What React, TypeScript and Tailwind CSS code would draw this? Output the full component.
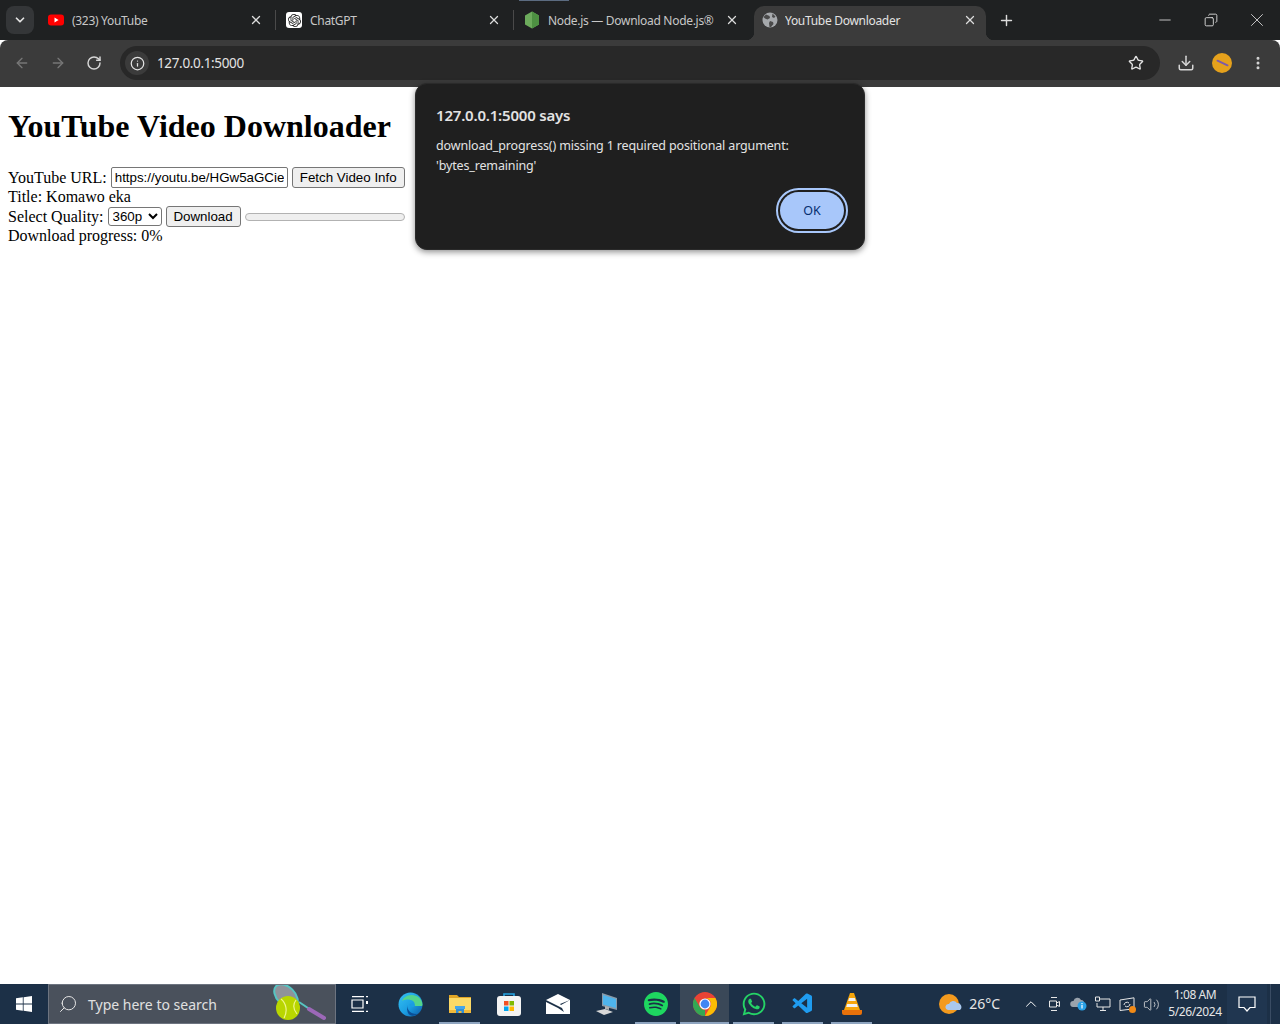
import { ArrowLeft, ArrowRight, ChevronDown, ChevronUp, Copy, Download, Info, Minus, MoreVertical, Plus, RotateCw, Search, Star, Volume2, X } from "lucide-react";
import { FaWhatsapp } from "react-icons/fa";
import { SiOpenai, SiSpotify } from "react-icons/si";
import { VscVscode } from "react-icons/vsc";

const uiFont = "font-['Noto_Sans',sans-serif]";

function YoutubeIcon() {
    return (
        <svg width="16" height="12" viewBox="0 0 16 12">
            <rect width="16" height="11" y="0.5" rx="3" fill="#f00" />
            <path d="M6.5 3.6 10.6 6l-4.1 2.4z" fill="#fff" />
        </svg>
    );
}

function NodeIcon() {
    return (
        <svg width="16" height="18" viewBox="0 0 16 18">
            <path d="M8 0.5 15 4.5v9L8 17.5 1 13.5v-9z" fill="#6cab5c" />
            <path d="M8 0.5 15 4.5v9L8 17.5z" fill="#4d9142" />
        </svg>
    );
}

function GlobeIcon() {
    return (
        <svg width="16" height="16" viewBox="0 0 16 16">
            <circle cx="8" cy="8" r="7.5" fill="#a6a9ac" />
            <path d="M4 2.5 7.5 4 8 6 5.5 7.5 3 6.5 1.5 5zM8 9l3 1 .5 2-2.5 3H7.5L7 11zM10.5 1.5l3 3-1.5 1.5-2-1z" fill="#4a4a4a" />
        </svg>
    );
}

function Tab({ icon, title, sizing, closeMargin, separator }: { icon: any; title: string; sizing: string; closeMargin: string; separator?: boolean }) {
    return (
        <div className={`${sizing} flex h-[34px] shrink-0 items-center pb-[6px] text-[#c7c7c7]`}>
            <div className="flex w-[16px] justify-center">{icon}</div>
            <span className="ml-[8px] flex-1 truncate pt-[2px] text-[12px] tracking-[-0.3px]">{title}</span>
            <X size={14} strokeWidth={2.200} className={`${closeMargin} text-[#dcdcdc]`} />
            {separator && <div className="h-[20px] w-px bg-[#4a4a4a]" />}
        </div>
    );
}

function ActiveTab({ icon, title }: { icon: any; title: string }) {
    return (
        <div className="relative flex h-[34px] w-[232px] shrink-0 items-center rounded-t-[10px] bg-[#3b3b3b] pb-[6px] pl-[8px] text-[#e3e3e3]">
            <div className="absolute bottom-0 left-[-8px] h-[8px] w-[8px] bg-[radial-gradient(circle_at_0_0,transparent_8px,#3b3b3b_8.5px)]" />
            <div className="absolute bottom-0 right-[-8px] h-[8px] w-[8px] bg-[radial-gradient(circle_at_100%_0,transparent_8px,#3b3b3b_8.5px)]" />
            <div className="flex w-[16px] justify-center">{icon}</div>
            <span className="ml-[7px] flex-1 truncate pt-[2px] text-[12px] tracking-[-0.3px]">{title}</span>
            <X size={14} strokeWidth={2.200} className="mr-[9px] text-[#dcdcdc]" />
        </div>
    );
}

function ChromeIcon() {
    return (
        <svg width="24" height="24" viewBox="0 0 24 24">
            <circle cx="12" cy="12" r="12" fill="#ea4335" />
            <path d="M12 24A12 12 0 0 1 1.6 6l5.2 9a6 6 0 0 0 5.2 3z" fill="#34a853" />
            <path d="M12 24a12 12 0 0 0 10.4-18H12a6 6 0 0 1 5.2 9z" fill="#fbbc04" />
            <circle cx="12" cy="12" r="5.6" fill="#fff" />
            <circle cx="12" cy="12" r="4.4" fill="#4285f4" />
        </svg>
    );
}

function EdgeIcon() {
    return (
        <svg width="25" height="25" viewBox="0 0 25 25">
            <defs>
                <linearGradient id="edge" x1="0" y1="0" x2="1" y2="1">
                    <stop offset="0" stopColor="#35c1f1" />
                    <stop offset="0.55" stopColor="#1b9de2" />
                    <stop offset="1" stopColor="#0c59a4" />
                </linearGradient>
            </defs>
            <circle cx="12.5" cy="12.5" r="12" fill="url(#edge)" />
            <path d="M24.5 13c0-6-5-10-11-10C9 3 5 6 4 9c3-2 8-2 11 0 2 1.500 2 4 1 5h8z" fill="#54d48c" />
            <path d="M9 13c0 5 4 9 9 9 1 0 2 0 3-1-3 3-9 4-11 0-1-2-1-5-1-8z" fill="#0b4f96" />
            <path d="M11 13c1-2 5-2 6 0 0 1-1 2-2 2s-3-1-4-2z" fill="#1b9de2" />
        </svg>
    );
}

function FolderIcon() {
    return (
        <svg width="24" height="20" viewBox="0 0 24 20">
            <path d="M1 1h8l2 2h12v16H1z" fill="#e0a526" />
            <rect x="1" y="4" width="22" height="15" fill="#fbd966" />
            <rect x="1" y="16" width="22" height="3" fill="#f0b93a" />
            <path d="M8 19v-4h8v4h-2.500v-2h-3v2z" fill="#2f8fd8" />
            <rect x="7" y="12" width="10" height="3" fill="#45a5e8" />
        </svg>
    );
}

function StoreIcon() {
    return (
        <svg width="24" height="24" viewBox="0 0 24 24">
            <path d="M7 6V2h10v4" fill="none" stroke="#25a5e4" strokeWidth="1.6" />
            <rect y="4" width="24" height="20" rx="3" fill="#f3f3f3" />
            <rect x="7" y="9" width="4.500" height="4.500" fill="#f25022" />
            <rect x="12.500" y="9" width="4.500" height="4.500" fill="#7fba00" />
            <rect x="7" y="14.500" width="4.500" height="4.500" fill="#00a4ef" />
            <rect x="12.500" y="14.500" width="4.500" height="4.500" fill="#ffb900" />
        </svg>
    );
}

function MailIcon() {
    return (
        <svg width="24" height="20" viewBox="0 0 24 20">
            <path d="M0 6 12 0l12 6v14H0z" fill="#fff" />
            <path d="M0 6l16 8 2 4-6-4-12-6zM24 6 15 11l-1-1z" fill="#1c3047" />
        </svg>
    );
}

function PcIcon() {
    return (
        <svg width="24" height="24" viewBox="0 0 24 24">
            <path d="M7 1 22 6v12L7 14z" fill="#8a9aa8" />
            <path d="M8 3l13 4v9L8 12.500z" fill="#4fb4ec" />
            <path d="M1 19l9-2 8 3-9 3z" fill="#d8d8d8" />
            <path d="M10 14v3l4 1v-3z" fill="#b0b0b0" />
        </svg>
    );
}

function VlcIcon() {
    return (
        <svg width="20" height="22" viewBox="0 0 20 22">
            <path d="M8 0h4l6 17H2z" fill="#f7a60b" />
            <path d="M7.200 5h5.600l1 3H6.200zM5.200 11h9.600l1 3H4.200z" fill="#f2f2f2" />
            <path d="M0 17h20v3a2 2 0 0 1-2 2H2a2 2 0 0 1-2-2z" fill="#e8710a" />
        </svg>
    );
}

function WeatherIcon() {
    return (
        <svg width="23" height="21" viewBox="0 0 23 21">
            <circle cx="10" cy="10" r="10" fill="#f39a1e" />
            <path d="M9 16a3 3 0 0 1 1-6 4.500 4.500 0 0 1 8-1 4 4 0 0 1 3 7z" fill="#a9c8ee" />
        </svg>
    );
}

function TennisIcon() {
    return (
        <svg width="54" height="38" viewBox="0 0 54 38">
            <path d="M27 17 51 33" stroke="#56c5c3" strokeWidth="2" />
            <path d="M37 24 52 33" stroke="#9c68b8" strokeWidth="4" strokeLinecap="round" />
            <ellipse cx="14" cy="11" rx="9" ry="14" transform="rotate(-45 14 11)" fill="#8f939b" stroke="#56c5c3" strokeWidth="2" />
            <circle cx="16" cy="23" r="12" fill="#b9d600" />
            <path d="M9 14c5 4 7 12 3 19M24 15c-3 4-3 9 1 14" stroke="#eef58a" strokeWidth="1.200" fill="none" />
        </svg>
    );
}

function TaskCell({ children, open, active }: { children: any; open?: boolean; active?: boolean }) {
    return (
        <div className={`${active ? "bg-[#3a4858]" : ""} relative flex h-[40px] w-[49px] shrink-0 items-center justify-center`}>
            {children}
            {open && <div className={`${active ? "inset-x-0" : "inset-x-[4px]"} absolute bottom-0 h-[2px] bg-[#8ea4bf]`} />}
        </div>
    );
}

function TrayIcon({ children }: { children: any }) {
    return <div className="flex w-[24px] items-center justify-center">{children}</div>;
}

export default function App() {
    return (
        <div className={`${uiFont} relative flex h-[1024px] w-[1280px] flex-col overflow-hidden bg-white`}>
            {/* tab strip */}
            <div className="relative flex h-[40px] items-end bg-[#1f2122]">
                <div className="absolute left-[519px] top-0 h-[1px] w-[50px] bg-[#5b6b80]" />
                <div className="mb-[6px] ml-[6px] mr-[2px] flex h-[28px] w-[28px] items-center justify-center rounded-[8px] bg-[#343638]">
                    <ChevronDown size={14} strokeWidth={3} className="text-[#e3e3e3]" />
                </div>
                <Tab sizing="w-[240px] pl-[12px]" closeMargin="mr-[12px]" separator title="(323) YouTube" icon={<YoutubeIcon />} />
                <Tab sizing="w-[238px] pl-[10px]" closeMargin="mr-[12px]" separator title="ChatGPT" icon={<div className="flex h-[16px] w-[16px] items-center justify-center rounded-[3px] bg-white"><SiOpenai size={13} className="text-[#222]" /></div>} />
                <Tab sizing="w-[240px] pl-[10px]" closeMargin="mr-[15px]" title="Node.js — Download Node.js®" icon={<NodeIcon />} />
                <ActiveTab title="YouTube Downloader" icon={<GlobeIcon />} />
                <div className="mb-[6px] ml-[10px] flex h-[28px] w-[20px] items-center justify-center">
                    <Plus size={17} strokeWidth={2} className="text-[#dcdcdc]" />
                </div>
                <div className="mb-[6px] ml-auto flex h-[28px] text-[#e3e3e3]">
                    <div className="flex w-[46px] items-center justify-center"><Minus size={18} strokeWidth={1.100} /></div>
                    <div className="flex w-[46px] items-center justify-center"><Copy size={14} strokeWidth={1.500} className="-scale-x-100" /></div>
                    <div className="flex w-[46px] items-center justify-center"><X size={22} strokeWidth={0.900} /></div>
                </div>
            </div>

            {/* toolbar */}
            <div className="flex h-[47px] items-center rounded-t-[8px] bg-[#3b3b3b] pb-[1px]">
                <div className="flex w-[120px] items-center pl-[14px]">
                    <ArrowLeft size={16} strokeWidth={2} className="text-[#777]" />
                    <ArrowRight size={16} strokeWidth={2} className="ml-[20px] text-[#777]" />
                    <RotateCw size={16} strokeWidth={2.200} className="ml-[20px] text-[#d6d6d6]" />
                </div>
                <div className="flex h-[34px] w-[1040px] items-center rounded-full bg-[#282828]">
                    <div className="ml-[5px] flex h-[24px] w-[24px] items-center justify-center rounded-full bg-[#3b3b3b]">
                        <Info size={15} strokeWidth={2} className="text-[#e3e3e3]" />
                    </div>
                    <span className="ml-[8px] text-[13.500px] tracking-[-0.35px] text-[#e3e3e3]">127.0.0.1:5000</span>
                    <Star size={16} strokeWidth={2} className="ml-auto mr-[16px] text-[#e3e3e3]" />
                </div>
                <div className="flex flex-1 items-center">
                    <Download size={18} strokeWidth={2} className="ml-[17px] text-[#d6d6d6]" />
                    <div className="ml-[17px] flex h-[20px] w-[20px] items-center justify-center rounded-full bg-[#e5a11c]">
                        <div className="h-[2px] w-[13px] rotate-[25deg] rounded-full bg-[#7d5aa8]" />
                    </div>
                    <MoreVertical size={16} strokeWidth={2.500} className="ml-[18px] text-[#d6d6d6]" />
                </div>
            </div>

            {/* page */}
            <div className="relative flex-1 bg-white px-[8px] font-['Liberation_Serif',serif] text-[16px] leading-[normal] text-black">
                <h1 className="mb-[22px] mt-[21px] text-[32px] font-bold leading-[37px]">YouTube Video Downloader</h1>
                <div className="flex h-[21px] items-center">
                    <span>YouTube URL:</span>
                    <input
                        readOnly
                        value="https://youtu.be/HGw5aGCieTU"
                        className="ml-[4px] h-[21px] w-[177px] rounded-[2px] border border-[#767676] px-[3px] font-['Liberation_Sans',sans-serif] text-[13.333px] outline-none"
                    />
                    <button className="ml-[4px] h-[21px] w-[113px] rounded-[3px] border border-[#767676] bg-[#efefef] font-['Liberation_Sans',sans-serif] text-[13.333px]">Fetch Video Info</button>
                </div>
                <div className="h-[18px] leading-[18px]">Title: Komawo eka</div>
                <div className="flex h-[21px] items-center">
                    <span>Select Quality:</span>
                    <select className="ml-[4px] h-[19px] w-[54px] rounded-[3px] border border-[#767676] bg-white font-['Liberation_Sans',sans-serif] text-[13.333px]">
                        <option>360p</option>
                    </select>
                    <button className="ml-[4px] h-[21px] w-[75px] rounded-[3px] border border-[#767676] bg-[#efefef] font-['Liberation_Sans',sans-serif] text-[13.333px]">Download</button>
                    <div className="ml-[4px] h-[8px] w-[160px] rounded-full border border-[#b2b2b2] bg-[#efefef]" />
                </div>
                <div className="h-[18px] leading-[18px]">Download progress: 0%</div>

                {/* alert dialog */}
                <div className={`${uiFont} absolute left-[415px] top-[-4px] h-[167px] w-[450px] rounded-[12px] border border-[#2a2a2a] bg-[#1f1f1f] pl-[20px] pr-[20px] pt-[19px] shadow-[0_2px_6px_rgba(0,0,0,0.45)]`}>
                    <div className="text-[15px] font-semibold leading-[24px] tracking-[-0.2px] text-[#e3e3e3]">127.0.0.1:5000 says</div>
                    <div className="mt-[9px] w-[400px] text-[12.500px] leading-[20px] tracking-[-0.15px] text-[#e3e3e3]">
                        download_progress() missing 1 required positional argument: 'bytes_remaining'
                    </div>
                    <div className="mt-[16px] flex justify-end">
                        <button className="flex h-[37px] w-[64px] items-center justify-center rounded-full bg-[#a8c7fa] text-[12.500px] font-normal text-[#062e6f] outline-2 outline-offset-2 outline-[#a8c7fa]">
                            OK
                        </button>
                    </div>
                </div>
            </div>

            {/* taskbar */}
            <div className="flex h-[40px] items-center bg-[#1c3047] text-white">
                <div className="flex h-[40px] w-[48px] items-center justify-center">
                    <svg width="16" height="16" viewBox="0 0 16 16" fill="#fff">
                        <path d="M0 2.300 6.800 1.300v6.300H0zM7.600 1.200 16 0v7.600H7.600zM0 8.400h6.800v6.300L0 13.700zM7.600 8.400H16V16l-8.400-1.200z" />
                    </svg>
                </div>
                <div className="flex h-[40px] w-[288px] items-center border border-[#6d7480] bg-[#4a515c]">
                    <Search size={20} strokeWidth={1.200} className="ml-[9px] -scale-x-100 text-[#e6e6e6]" />
                    <span className="ml-[10px] pt-[1px] text-[14px] text-[#e0e0e0]">Type here to search</span>
                    <div className="ml-auto mr-[9px] flex items-center"><TennisIcon /></div>
                </div>
                <div className="flex h-[40px] w-[50px] shrink-0 items-center justify-center pr-[2px]">
                    <svg width="18" height="16" viewBox="0 0 18 16" fill="none" stroke="#fff" strokeWidth="1.200">
                        <path d="M1 .6h12M1 15.400h12M1 4h11v8H1zM15 .6h2M15 15.400h2" />
                        <rect x="15" y="5" width="2" height="3" fill="#fff" stroke="none" />
                    </svg>
                </div>
                <TaskCell><EdgeIcon /></TaskCell>
                <TaskCell open><FolderIcon /></TaskCell>
                <TaskCell><StoreIcon /></TaskCell>
                <TaskCell><MailIcon /></TaskCell>
                <TaskCell><PcIcon /></TaskCell>
                <TaskCell open><SiSpotify size={24} className="text-[#1ed760]" /></TaskCell>
                <TaskCell open active><ChromeIcon /></TaskCell>
                <TaskCell open><FaWhatsapp size={26} className="text-[#25d366]" /></TaskCell>
                <TaskCell open><VscVscode size={24} className="text-[#1f9cf0]" /></TaskCell>
                <TaskCell open><VlcIcon /></TaskCell>

                <div className="ml-auto flex h-[40px] items-center">
                    <WeatherIcon />
                    <span className="ml-[7px] pb-[2px] text-[14px] text-[#e6e6e6]">26°C</span>
                    <ChevronUp size={18} strokeWidth={1.300} className="ml-[22px] text-white" />
                    <div className="ml-[3px] flex">
                        <TrayIcon>
                            <svg width="14" height="16" viewBox="0 0 14 16" fill="none" stroke="#e6e6e6" strokeWidth="1">
                                <path d="M3 1.500h6M3 14.500h6M1.500 5h7v6h-7zM8.500 7l3-1.500v5l-3-1.500" />
                            </svg>
                        </TrayIcon>
                        <TrayIcon>
                            <svg width="18" height="14" viewBox="0 0 18 14">
                                <path d="M3 10a3 3 0 0 1 .5-6 4 4 0 0 1 7.500-1 3 3 0 0 1 3 4v3z" fill="#9aa3ad" />
                                <circle cx="12" cy="9" r="4.500" fill="#29a0e6" />
                                <rect x="11.400" y="8" width="1.200" height="3.500" fill="#fff" />
                                <rect x="11.400" y="6" width="1.200" height="1.200" fill="#fff" />
                            </svg>
                        </TrayIcon>
                        <TrayIcon>
                            <svg width="16" height="16" viewBox="0 0 16 16" fill="none" stroke="#e6e6e6" strokeWidth="1">
                                <path d="M4 3h11v8H2V7M8 11v3M5 14.500h6M.5 1h4v4h-4z" />
                            </svg>
                        </TrayIcon>
                        <TrayIcon>
                            <div className="relative h-[15px] w-[16px]">
                                <svg width="16" height="15" viewBox="0 0 16 15" fill="none" stroke="#e6e6e6" strokeWidth="1">
                                    <path d="M1 3 15 .8v11L1 13.500zM5 8a3 3 0 0 1 5-2M11 7a3 3 0 0 1-5 2" />
                                </svg>
                                <div className="absolute bottom-[-1px] right-[-1px] h-[7px] w-[7px] rounded-full bg-[#f28a16]" />
                            </div>
                        </TrayIcon>
                        <TrayIcon><Volume2 size={17} strokeWidth={1.100} className="text-[#e6e6e6]" /></TrayIcon>
                    </div>
                    <div className="flex w-[64px] flex-col items-center pb-[2px] text-[12px] leading-[17px] tracking-[-0.4px] text-[#e6e6e6]">
                        <span>1:08 AM</span>
                        <span>5/26/2024</span>
                    </div>
                    <div className="flex h-[40px] w-[40px] items-center justify-center bg-[#203650]">
                        <svg width="18" height="16" viewBox="0 0 18 16" fill="none" stroke="#fff" strokeWidth="1.200">
                            <path d="M1 1h16v10.500h-5L9 15l-3-3.500H1z" />
                        </svg>
                    </div>
                    <div className="ml-[3px] h-[40px] w-[10px] border-l border-[#3a4c63]" />
                </div>
            </div>
        </div>
    );
}
